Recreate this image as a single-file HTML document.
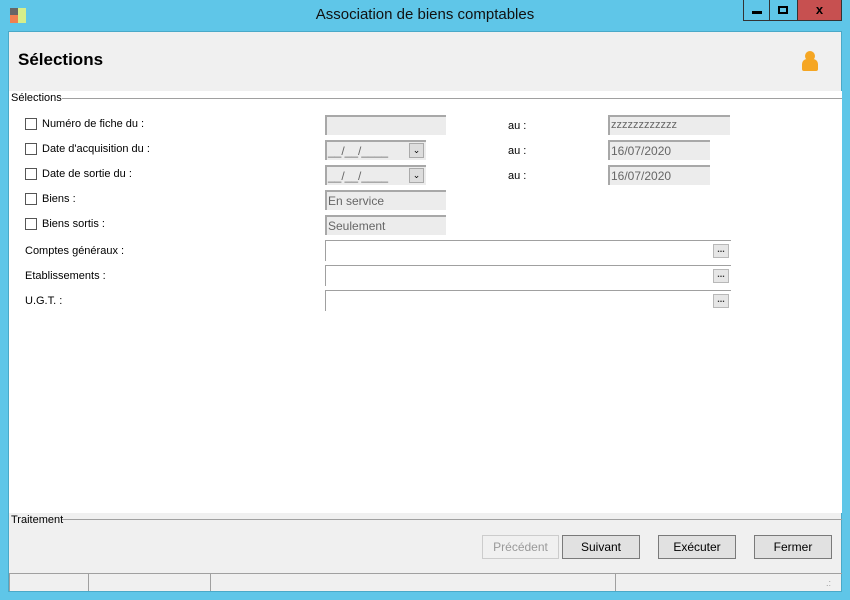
<!DOCTYPE html><html><head><meta charset="utf-8"><style>
*{box-sizing:border-box;margin:0;padding:0}
body{width:850px;height:600px;background:#5fc6e8;font-family:"Liberation Sans",sans-serif;font-size:11px;color:#000;position:relative;overflow:hidden}
.a{position:absolute}
.win{left:8px;top:31px;width:834px;height:561px;background:#f0f0f0;border:1px solid #4aa9c8}
.cb{width:12px;height:12px;border:1px solid #555;background:#fff}
.tf{height:20px;background:#ececec;border-top:2px solid #a8a8a8;border-left:2px solid #a8a8a8;color:#666;font-size:12px;padding:2px 0 0 1px}
.wf{height:21px;background:#fff;border-top:1px solid #a0a0a0;border-left:1px solid #a0a0a0}
.dots{width:16px;height:14px;background:#e6e6e6;border:1px solid #b8b8b8;font-size:9px;font-weight:bold;text-align:center;line-height:8px;color:#333}
.btn{height:24px;background:#e1e1e1;border:1px solid #7a7a7a;text-align:center;line-height:22px;font-size:12px}
.dd{width:15px;height:15px;background:#ddd;border:1px solid #aaa;font-size:9px;text-align:center;line-height:13px}
</style></head><body>
<div class="a" style="left:10px;top:8px;width:8px;height:7px;background:#666"></div>
<div class="a" style="left:10px;top:15px;width:8px;height:8px;background:#f08050"></div>
<div class="a" style="left:18px;top:8px;width:8px;height:15px;background:#d6ee8a"></div>
<div class="a" style="left:0;top:6px;width:850px;text-align:center;font-size:15px;color:#111">Association de biens comptables</div>
<div class="a" style="left:743px;top:0;width:27px;height:21px;border:1px solid #333;border-top:0"><div class="a" style="left:8px;top:11px;width:10px;height:3px;background:#000"></div></div>
<div class="a" style="left:770px;top:0;width:28px;height:21px;border:1px solid #333;border-top:0;border-left:0"><div class="a" style="left:8px;top:6px;width:10px;height:8px;border:2px solid #000"></div></div>
<div class="a" style="left:798px;top:0;width:44px;height:21px;background:#c75050;border:1px solid #333;border-top:0;border-left:0;text-align:center;font-weight:bold;font-size:13px;line-height:20px">x</div>
<div class="a win"></div>
<div class="a" style="left:18px;top:50px;font-size:17px;font-weight:bold">Sélections</div>
<div class="a" style="left:805px;top:51px;width:10px;height:10px;border-radius:50%;background:#f5a623"></div>
<div class="a" style="left:802px;top:59px;width:16px;height:12px;border-radius:5px 5px 2px 2px;background:#f5a623"></div>
<div class="a" style="left:9px;top:91px;width:833px;height:422px;background:#fff"></div>
<div class="a" style="left:62px;top:98px;width:780px;height:1px;background:#a0a0a0"></div>
<div class="a" style="left:11px;top:92px;font-size:11px">Sélections</div>
<div class="a cb" style="left:25px;top:118px"></div><div class="a" style="left:42px;top:118px">Numéro de fiche du :</div>
<div class="a cb" style="left:25px;top:143px"></div><div class="a" style="left:42px;top:143px">Date d'acquisition du :</div>
<div class="a cb" style="left:25px;top:168px"></div><div class="a" style="left:42px;top:168px">Date de sortie du :</div>
<div class="a cb" style="left:25px;top:193px"></div><div class="a" style="left:42px;top:193px">Biens :</div>
<div class="a cb" style="left:25px;top:218px"></div><div class="a" style="left:42px;top:218px">Biens sortis :</div>
<div class="a" style="left:25px;top:245px">Comptes généraux :</div>
<div class="a" style="left:25px;top:270px">Etablissements :</div>
<div class="a" style="left:25px;top:295px">U.G.T. :</div>
<div class="a tf" style="left:325px;top:115px;width:121px"></div>
<div class="a tf" style="left:325px;top:140px;width:101px">__/__/____</div><div class="a dd" style="left:409px;top:143px">&#8964;</div>
<div class="a tf" style="left:325px;top:165px;width:101px">__/__/____</div><div class="a dd" style="left:409px;top:168px">&#8964;</div>
<div class="a tf" style="left:325px;top:190px;width:121px">En service</div>
<div class="a tf" style="left:325px;top:215px;width:121px">Seulement</div>
<div class="a" style="left:508px;top:120px">au :</div>
<div class="a" style="left:508px;top:145px">au :</div>
<div class="a" style="left:508px;top:170px">au :</div>
<div class="a tf" style="left:608px;top:115px;width:122px;font-size:11px">zzzzzzzzzzzz</div>
<div class="a tf" style="left:608px;top:140px;width:102px">16/07/2020</div>
<div class="a tf" style="left:608px;top:165px;width:102px">16/07/2020</div>
<div class="a wf" style="left:325px;top:240px;width:406px"></div><div class="a dots" style="left:713px;top:244px">...</div>
<div class="a wf" style="left:325px;top:265px;width:406px"></div><div class="a dots" style="left:713px;top:269px">...</div>
<div class="a wf" style="left:325px;top:290px;width:406px"></div><div class="a dots" style="left:713px;top:294px">...</div>
<div class="a" style="left:62px;top:519px;width:780px;height:1px;background:#a0a0a0"></div>
<div class="a" style="left:11px;top:514px;font-size:11px">Traitement</div>
<div class="a btn" style="left:482px;top:535px;width:77px;color:#999;background:#f0f0f0;border-color:#ccc">Précédent</div>
<div class="a btn" style="left:562px;top:535px;width:78px">Suivant</div>
<div class="a btn" style="left:658px;top:535px;width:78px">Exécuter</div>
<div class="a btn" style="left:754px;top:535px;width:78px">Fermer</div>
<div class="a" style="left:9px;top:573px;width:833px;height:1px;background:#a0a0a0"></div>
<div class="a" style="left:9px;top:573px;width:1px;height:18px;background:#a0a0a0"></div>
<div class="a" style="left:88px;top:574px;width:1px;height:17px;background:#a0a0a0"></div>
<div class="a" style="left:210px;top:574px;width:1px;height:17px;background:#a0a0a0"></div>
<div class="a" style="left:615px;top:574px;width:1px;height:17px;background:#a0a0a0"></div>
<div class="a" style="left:826px;top:578px;font-size:9px;color:#999">.:</div>
</body></html>
